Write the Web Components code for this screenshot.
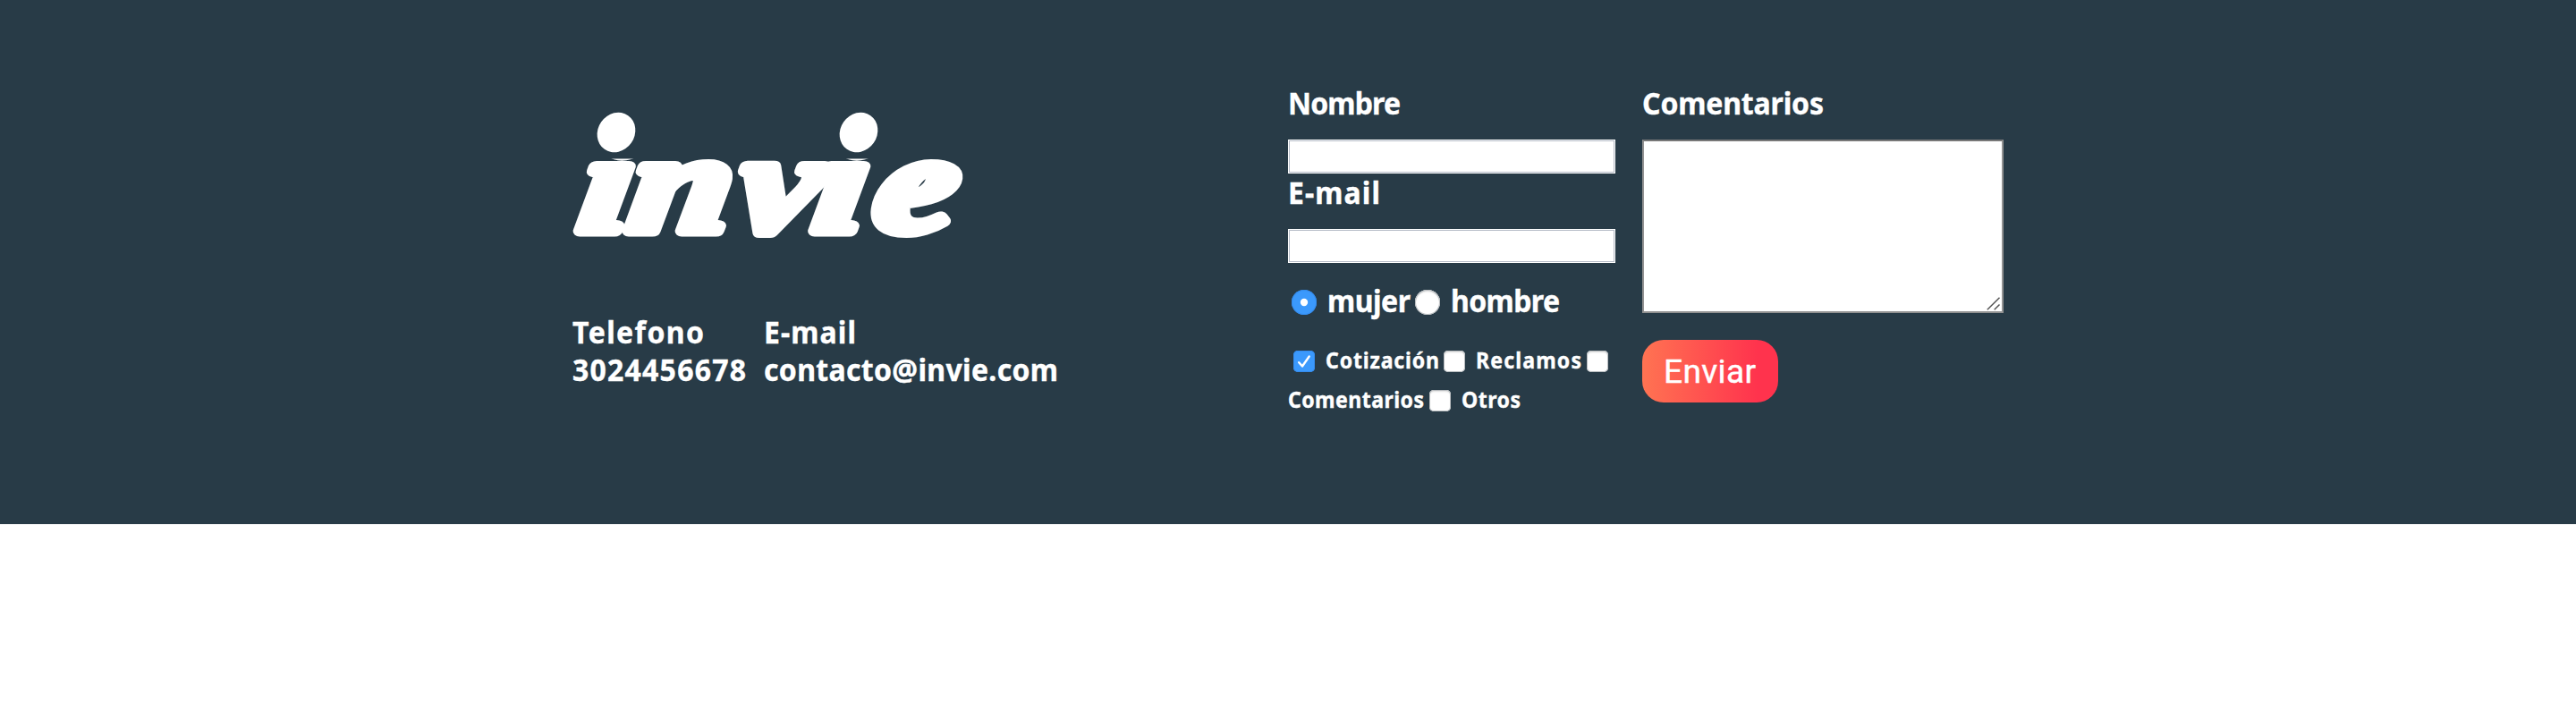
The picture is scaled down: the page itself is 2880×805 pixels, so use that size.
<!DOCTYPE html>
<html lang="es"><head><meta charset="utf-8"><title>invie</title>
<style>html,body{margin:0;background:#fff}</style></head><body>
<invie-footer></invie-footer>
<script>
// Slightly condensed text run tracked to an exact measure.
customElements.define('tracked-text', class extends HTMLElement {
  connectedCallback(){
    const w=+this.getAttribute('w'), k=+(this.getAttribute('k')||.94);
    const r=this.attachShadow({mode:'open'});
    r.innerHTML=`<style>:host{display:block;width:${w}px;height:var(--lh,42px);line-height:var(--lh,42px);white-space:nowrap;flex:none;-webkit-text-stroke:.4px #fff}span{display:inline-block;transform-origin:0 0}</style><span><slot></slot></span>`;
    const s=r.querySelector('span'), n=this.textContent.length;
    s.style.letterSpacing=((w/k-s.getBoundingClientRect().width)/(n-1)).toFixed(3)+'px';
    s.style.transform=`translateY(-1px) scaleX(${k})`;
  }
});
customElements.define('invie-logo', class extends HTMLElement {
  connectedCallback(){
    this.attachShadow({mode:'open'}).innerHTML=`<style>:host{display:block;width:436px;height:140px}svg{display:block;overflow:visible}
    text{font:italic 700 156px "Liberation Serif",serif;fill:#fff;stroke:#fff;stroke-width:13px;stroke-linejoin:round}</style>
    <svg width="436" height="140" viewBox="0 0 436 140" role="img" aria-label="invie">
      <clipPath id="body"><path d="M-10 51.5H450V150H-10z"/></clipPath>
      <g clip-path="url(#body)"><text transform="translate(0 132) skewX(-8) scale(1.3 1)" x="3 46 140 205 257" y="0">invie</text></g>
      <ellipse cx="49" cy="22" rx="20.5" ry="23" transform="rotate(35 49 22)" fill="#fff"/>
      <ellipse cx="320" cy="22" rx="20.5" ry="23" transform="rotate(35 320 22)" fill="#fff"/>
    </svg>`;
  }
});
customElements.define('text-field', class extends HTMLElement {
  connectedCallback(){
    this.attachShadow({mode:'open'}).innerHTML=`<style>:host{display:block}input{display:block;box-sizing:border-box;width:366px;height:38px;margin:0;padding:2px;border:1px solid #fff;border-radius:0;background:#fff;box-shadow:inset 0 0 0 1px #b4bac6;outline:0}</style><input type="text">`;
  }
});
customElements.define('choice-mark', class extends HTMLElement {
  connectedCallback(){
    const radio=this.getAttribute('type')==='radio', on=this.hasAttribute('checked'), d=radio?28:24;
    const mark=!on?'':radio?'<circle cx="14" cy="14" r="4.2" fill="#fff"/>':'<path d="M6.2 13.2 10 17.5 17.7 6.5" fill="none" stroke="#fff" stroke-width="2.4" stroke-linecap="round" stroke-linejoin="round"/>';
    this.attachShadow({mode:'open'}).innerHTML=`<style>:host{display:block;flex:none;width:${d}px;height:${d}px;border-radius:${radio?'50%':'5px'};background:${on?'#3b99fc':'#fff'};box-shadow:${on?'inset 0 0 0 1px #358bec':'inset 0 0 0 1px #b8bcbf, inset 0 2px 2px #ddd'}}svg{display:block}</style><svg width="${d}" height="${d}">${mark}</svg>`;
  }
});
customElements.define('send-button', class extends HTMLElement {
  connectedCallback(){
    this.attachShadow({mode:'open'}).innerHTML=`<style>:host{display:block}button{display:flex;align-items:center;box-sizing:border-box;width:152px;height:70px;padding:3px 0 0 23px;border:0;border-radius:24px;color:#fff;background:linear-gradient(to right,#ff7352,#ff334d 85%);font:400 36px Roboto,sans-serif}</style><button><slot></slot></button>`;
  }
});
customElements.define('invie-footer', class extends HTMLElement {
  connectedCallback(){
    this.attachShadow({mode:'open'}).innerHTML=`<style>
    :host{display:block;background:#283b47;color:#fff;height:586px;font:700 34px "Noto Sans",sans-serif}
    .wrap{display:grid;grid-template-columns:800px 396px 404px;width:1600px;margin:0 auto}
    .brand{padding-top:126px}
    .contact{display:grid;grid-template-columns:214px auto;margin-top:85px}
    .col{padding-top:95px}
    .field{margin-top:19px}.mail{margin-top:1px}
    .row{display:flex;align-items:center}
    .radios tracked-text{margin-top:-3px}
    .radios{margin:23px 0 0 4px;height:42px}
    .checks{--lh:44px;font-size:24.5px;height:44px}
    .first{margin:23px 0 0 6px}
    textarea{display:block;box-sizing:border-box;width:404px;height:194px;margin:19px 0 30px;border:2px solid #929292;border-top-color:#777;border-radius:0;background:#fff;resize:none;outline:0}
    .area{position:relative}.area svg{position:absolute;left:385px;top:176px}
    </style><div class="wrap">
    <section class="brand"><invie-logo></invie-logo>
      <div class="contact"><tracked-text w="147">Telefono</tracked-text><tracked-text w="103">E-mail</tracked-text>
      <tracked-text w="194">3024456678</tracked-text><tracked-text w="329">contacto@invie.com</tracked-text></div></section>
    <section class="col"><tracked-text w="126">Nombre</tracked-text><text-field class="field"></text-field>
      <tracked-text class="mail" w="103">E-mail</tracked-text><text-field class="field"></text-field>
      <div class="row radios"><choice-mark type="radio" checked></choice-mark><tracked-text w="93" style="margin-left:12px">mujer</tracked-text><choice-mark type="radio" style="margin-left:5px"></choice-mark><tracked-text w="122" style="margin-left:12px">hombre</tracked-text></div>
      <div class="row checks first"><choice-mark checked></choice-mark><tracked-text w="127" style="margin-left:12px">Cotización</tracked-text><choice-mark style="margin-left:5px"></choice-mark><tracked-text w="118" style="margin-left:12px">Reclamos</tracked-text><choice-mark style="margin-left:6px"></choice-mark></div>
      <div class="row checks"><tracked-text w="152">Comentarios</tracked-text><choice-mark style="margin-left:6px"></choice-mark><tracked-text w="66" style="margin-left:12px">Otros</tracked-text></div>
    </section>
    <section class="col"><tracked-text w="203">Comentarios</tracked-text>
      <div class="area"><textarea></textarea><svg width="16" height="16"><path d="M.8 14.3 14.5.8M8.7 14.3l5.8-5.8" stroke="#555" stroke-width="1.5"/></svg></div>
      <send-button><tracked-text w="103" k="1.03">Enviar</tracked-text></send-button></section>
    </div>`;
  }
});
</script></body></html>
